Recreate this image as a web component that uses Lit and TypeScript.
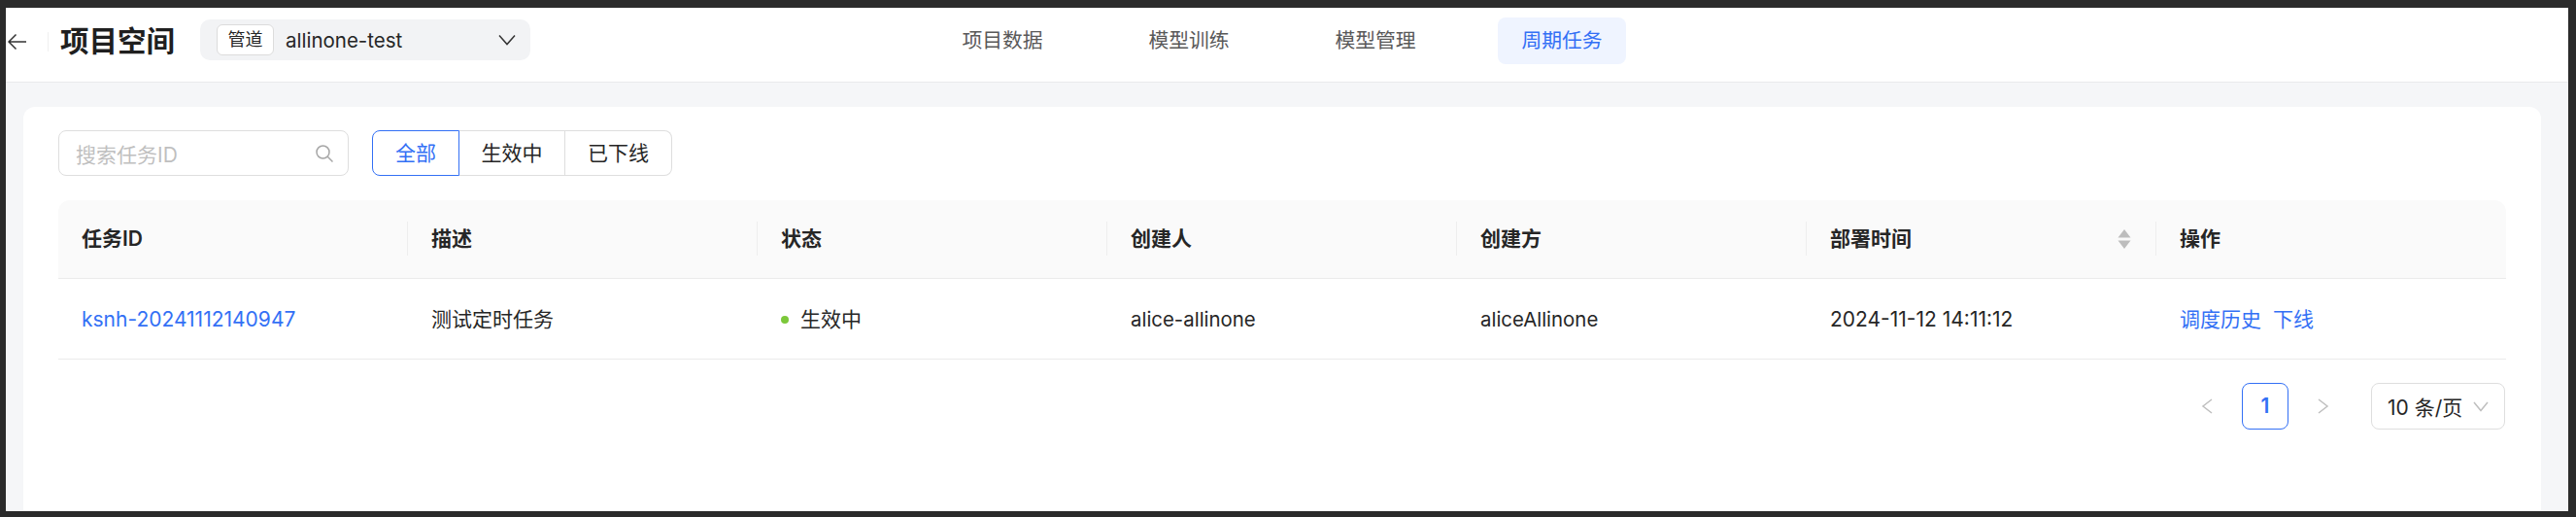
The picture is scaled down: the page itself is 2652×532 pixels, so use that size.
import { LitElement, html, css, nothing } from "lit";
import { customElement, state } from "lit/decorators.js";

const NAV = ["项目数据", "模型训练", "模型管理", "周期任务"];
const FILTERS = ["全部", "生效中", "已下线"];
const COLUMNS = ["任务ID", "描述", "状态", "创建人", "创建方", "部署时间", "操作"];

@customElement("app-root")
export class AppRoot extends LitElement {
  static styles = css`
    :host {
      display: block;
      width: 2652px;
      height: 532px;
      box-sizing: border-box;
      padding: 8px 8px 6px 6px;
      background: #2b2b2b;
      font-family: Inter, "Noto Sans CJK SC", sans-serif;
      font-size: 21px;
      color: #262626;
    }

    .frame {
      height: 100%;
      display: flex;
      flex-direction: column;
      background: #f5f6f8;
      overflow: hidden;
    }

    .header {
      flex: none;
      box-sizing: border-box;
      height: 77px;
      display: flex;
      align-items: flex-start;
      background: #fff;
      border-bottom: 1px solid #e9eaec;
    }

    .back {
      display: flex;
      align-items: center;
      height: 70px;
      padding-left: 2px;
      color: #333;
    }

    .back-divider {
      width: 1px;
      height: 20px;
      margin: 25px 13px 0 21px;
      background: #f0f0f0;
    }

    .title {
      width: 144px;
      height: 70px;
      margin-left: -1px;
      line-height: 68px;
      font-size: 29.5px;
      font-weight: 600;
      color: #1f1f1f;
      white-space: nowrap;
    }

    .project {
      box-sizing: border-box;
      width: 340px;
      height: 42px;
      margin-top: 12px;
      padding: 0 15px 0 17px;
      display: flex;
      align-items: center;
      border-radius: 10px;
      background: #f2f3f5;
    }

    .project-tag {
      box-sizing: border-box;
      width: 59px;
      height: 32px;
      line-height: 30px;
      text-align: center;
      font-size: 18px;
      border: 1px solid #dcdcdc;
      border-radius: 6px;
      background: #fff;
    }

    .project-name {
      flex: 1;
      margin-left: 12px;
      font-size: 20.5px;
    }

    .nav {
      display: flex;
      gap: 60px;
      margin: 10px 0 0 420px;
    }

    .nav-item {
      width: 132px;
      height: 48px;
      line-height: 48px;
      text-align: center;
      font-size: 20.8px;
      border-radius: 8px;
      color: #595959;
    }

    .nav-item.active {
      background: #eff4ff;
      color: #3370f5;
    }

    .card {
      flex: 1;
      margin: 25px 28px 0 18px;
      padding: 24px 36px 0;
      border-radius: 12px 12px 0 0;
      background: #fff;
    }

    .filters {
      display: flex;
      gap: 24px;
      height: 47px;
    }

    .search {
      box-sizing: border-box;
      width: 299px;
      padding: 0 14px 0 17px;
      display: flex;
      align-items: center;
      justify-content: space-between;
      border: 1px solid #dedede;
      border-radius: 8px;
      color: #bfbfbf;
    }

    .segments {
      display: flex;
    }

    .segment {
      box-sizing: border-box;
      height: 47px;
      line-height: 45px;
      text-align: center;
      border: 1px solid #dedede;
      border-left: none;
    }

    .segment:first-child {
      border-left: 1px solid #dedede;
      border-radius: 8px 0 0 8px;
    }

    .segment:last-child {
      border-radius: 0 8px 8px 0;
    }

    .segment.active {
      border: 1px solid #3370f5;
      color: #3370f5;
    }

    .table {
      margin-top: 25px;
      display: grid;
      grid-template-columns: repeat(7, 360px);
    }

    .th {
      box-sizing: border-box;
      height: 81px;
      padding: 0 24px 1px;
      display: flex;
      align-items: center;
      justify-content: space-between;
      line-height: 30px;
      background: #fafafa;
      border-bottom: 1px solid #ebebeb;
      font-weight: 600;
      position: relative;
    }

    .th:first-child {
      border-top-left-radius: 12px;
    }

    .th:nth-child(7) {
      border-top-right-radius: 12px;
    }

    .th + .th::before {
      content: "";
      position: absolute;
      left: -1px;
      top: 22px;
      width: 1px;
      height: 35px;
      background: #eeeeee;
    }

    .sort {
      margin-right: 2px;
    }

    .td {
      box-sizing: border-box;
      height: 83px;
      padding: 2px 24px 0;
      display: flex;
      align-items: center;
      line-height: 30px;
      border-bottom: 1px solid #ebebeb;
    }

    .latin {
      font-size: 20.4px;
    }

    .link {
      color: #3370f5;
    }

    .actions {
      gap: 12px;
    }

    .dot {
      width: 8px;
      height: 8px;
      margin-right: 12px;
      border-radius: 50%;
      background: #7cc83a;
    }

    .pager {
      margin-top: 24px;
      display: flex;
      align-items: center;
      justify-content: flex-end;
      color: #bfbfbf;
    }

    .page {
      box-sizing: border-box;
      width: 48px;
      height: 48px;
      line-height: 46px;
      margin: 0 30px;
      text-align: center;
      font-weight: 600;
      border: 1px solid #3370f5;
      border-radius: 8px;
      color: #3370f5;
    }

    .size {
      box-sizing: border-box;
      width: 138px;
      height: 48px;
      margin-left: 43px;
      margin-right: 1px;
      padding: 0 16px;
      display: flex;
      align-items: center;
      justify-content: space-between;
      border: 1px solid #dedede;
      border-radius: 8px;
      color: #262626;
      white-space: nowrap;
    }
  `;

  @state()
  private filter = "全部";

  private chevron(width: number, height: number, points: string, color: string) {
    return html`<svg
      width=${width}
      height=${height}
      viewBox="0 0 ${width} ${height}"
      fill="none"
      stroke=${color}
      stroke-width="1.5"
    >
      <path d=${points} />
    </svg>`;
  }

  private renderHeader() {
    return html`<div class="header">
      <div class="back">
        <svg width="20" height="18" viewBox="0 0 20 18" fill="none" stroke="currentColor" stroke-width="1.5">
          <path d="M19 9H1M8.5 1.5 1 9l7.5 7.5" />
        </svg>
      </div>
      <div class="back-divider"></div>
      <div class="title">项目空间</div>
      <div class="project">
        <span class="project-tag">管道</span>
        <span class="project-name">allinone-test</span>
        ${this.chevron(18, 12, "M1 1.5 9 10.5 17 1.5", "#333")}
      </div>
      <div class="nav">
        ${NAV.map(
          (item) => html`<div class="nav-item ${item === "周期任务" ? "active" : ""}">${item}</div>`
        )}
      </div>
    </div>`;
  }

  private renderFilters() {
    const widths = [90, 109, 110];
    return html`<div class="filters">
      <div class="search">
        <span>搜索任务ID</span>
        <svg width="20" height="20" viewBox="0 0 20 20" fill="none" stroke="#a6a6a6" stroke-width="1.5">
          <circle cx="8.5" cy="8.5" r="6.5" />
          <path d="M13.3 13.3 18.5 18.5" />
        </svg>
      </div>
      <div class="segments">
        ${FILTERS.map(
          (item, i) => html`<div
            class="segment ${item === this.filter ? "active" : ""}"
            style="width:${widths[i]}px"
          >
            ${item}
          </div>`
        )}
      </div>
    </div>`;
  }

  private renderTable() {
    return html`<div class="table">
      ${COLUMNS.map(
        (col) => html`<div class="th">
          <span>${col}</span>
          ${col === "部署时间"
            ? html`<svg class="sort" width="14" height="20" viewBox="0 0 14 20" fill="#bdbdbd">
                <path d="M7 0 13.5 8.5H.5ZM7 20 .5 11.5H13.5Z" />
              </svg>`
            : nothing}
        </div>`
      )}
      <div class="td link">ksnh-20241112140947</div>
      <div class="td">测试定时任务</div>
      <div class="td"><span class="dot"></span>生效中</div>
      <div class="td latin">alice-allinone</div>
      <div class="td latin">aliceAllinone</div>
      <div class="td">2024-11-12 14:11:12</div>
      <div class="td actions link"><span>调度历史</span><span>下线</span></div>
    </div>`;
  }

  private renderPager() {
    return html`<div class="pager">
      ${this.chevron(12, 16, "M11 1 2 8l9 7", "#bfbfbf")}
      <div class="page">1</div>
      ${this.chevron(12, 16, "M1 1l9 7-9 7", "#bfbfbf")}
      <div class="size">
        <span>10 条/页</span>
        ${this.chevron(16, 11, "M1 1 8 9.5 15 1", "#bfbfbf")}
      </div>
    </div>`;
  }

  render() {
    return html`<div class="frame">
      ${this.renderHeader()}
      <div class="card">${this.renderFilters()} ${this.renderTable()} ${this.renderPager()}</div>
    </div>`;
  }
}

declare global {
  interface HTMLElementTagNameMap {
    "app-root": AppRoot;
  }
}
